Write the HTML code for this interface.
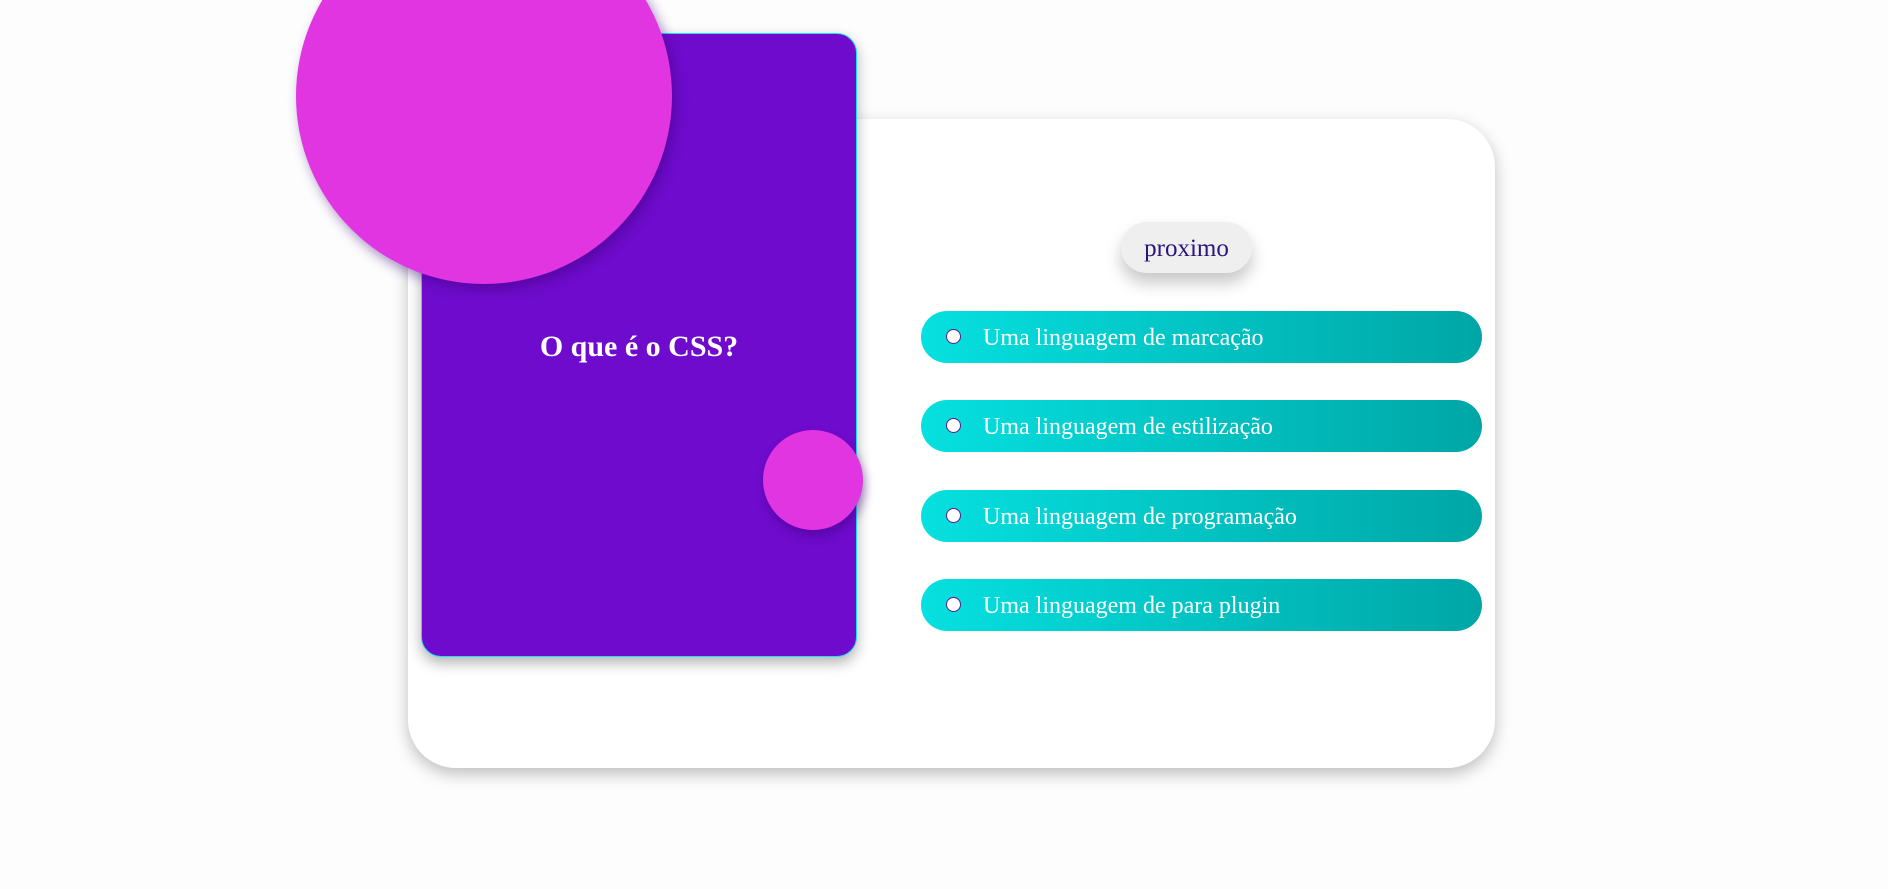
<!DOCTYPE html>
<html><head><meta charset="utf-8"><style>
html,body{margin:0;padding:0;width:1888px;height:889px;background:#fdfdfd;overflow:hidden;font-family:"Liberation Serif",serif;}
.outer{position:absolute;left:408px;top:119px;width:1087px;height:649px;background:#fff;border-radius:48px;box-shadow:0 6px 16px rgba(0,0,0,0.25);}
.purple{position:absolute;left:421px;top:33px;width:434px;height:622px;background:#6f0bcd;border:1px solid #20e0f0;border-radius:20px;box-shadow:0 6px 14px rgba(0,0,0,0.3);}
.big{position:absolute;left:296px;top:-92px;width:376px;height:376px;border-radius:50%;background:#e035e0;box-shadow:4px 6px 12px rgba(60,0,120,0.45);}
.small{position:absolute;left:763px;top:430px;width:100px;height:100px;border-radius:50%;background:#e035e0;box-shadow:2px 6px 10px rgba(60,0,120,0.45);}
.title{position:absolute;left:421px;top:330px;width:436px;text-align:center;color:#fff;font-weight:bold;font-size:30px;}
.btn{position:absolute;left:1121px;top:222px;width:131px;height:51px;border-radius:26px;background:#efefef;box-shadow:0 10px 16px rgba(0,0,0,0.22);color:#2a157a;font-size:25px;text-align:center;line-height:53px;}
.opt{position:absolute;left:921px;width:561px;height:52px;border-radius:26px;background:linear-gradient(90deg,#06e0e0,#00a6a6);color:#fff;font-size:24px;line-height:52px;}
.opt i{position:absolute;left:25px;top:18px;border-radius:50%;background:#fff;border:1.5px solid #5a1a90;box-sizing:border-box;width:15px;height:15px;}
.opt span{position:absolute;left:62px;top:1px;}
</style></head><body>
<div class="outer"></div>
<div class="purple"></div>
<div class="big"></div>
<div class="small"></div>
<div class="title">O que é o CSS?</div>
<div class="btn">proximo</div>
<div class="opt" style="top:311px"><i></i><span>Uma linguagem de marcação</span></div>
<div class="opt" style="top:400px"><i></i><span>Uma linguagem de estilização</span></div>
<div class="opt" style="top:490px"><i></i><span>Uma linguagem de programação</span></div>
<div class="opt" style="top:579px"><i></i><span>Uma linguagem de para plugin</span></div>
</body></html>
